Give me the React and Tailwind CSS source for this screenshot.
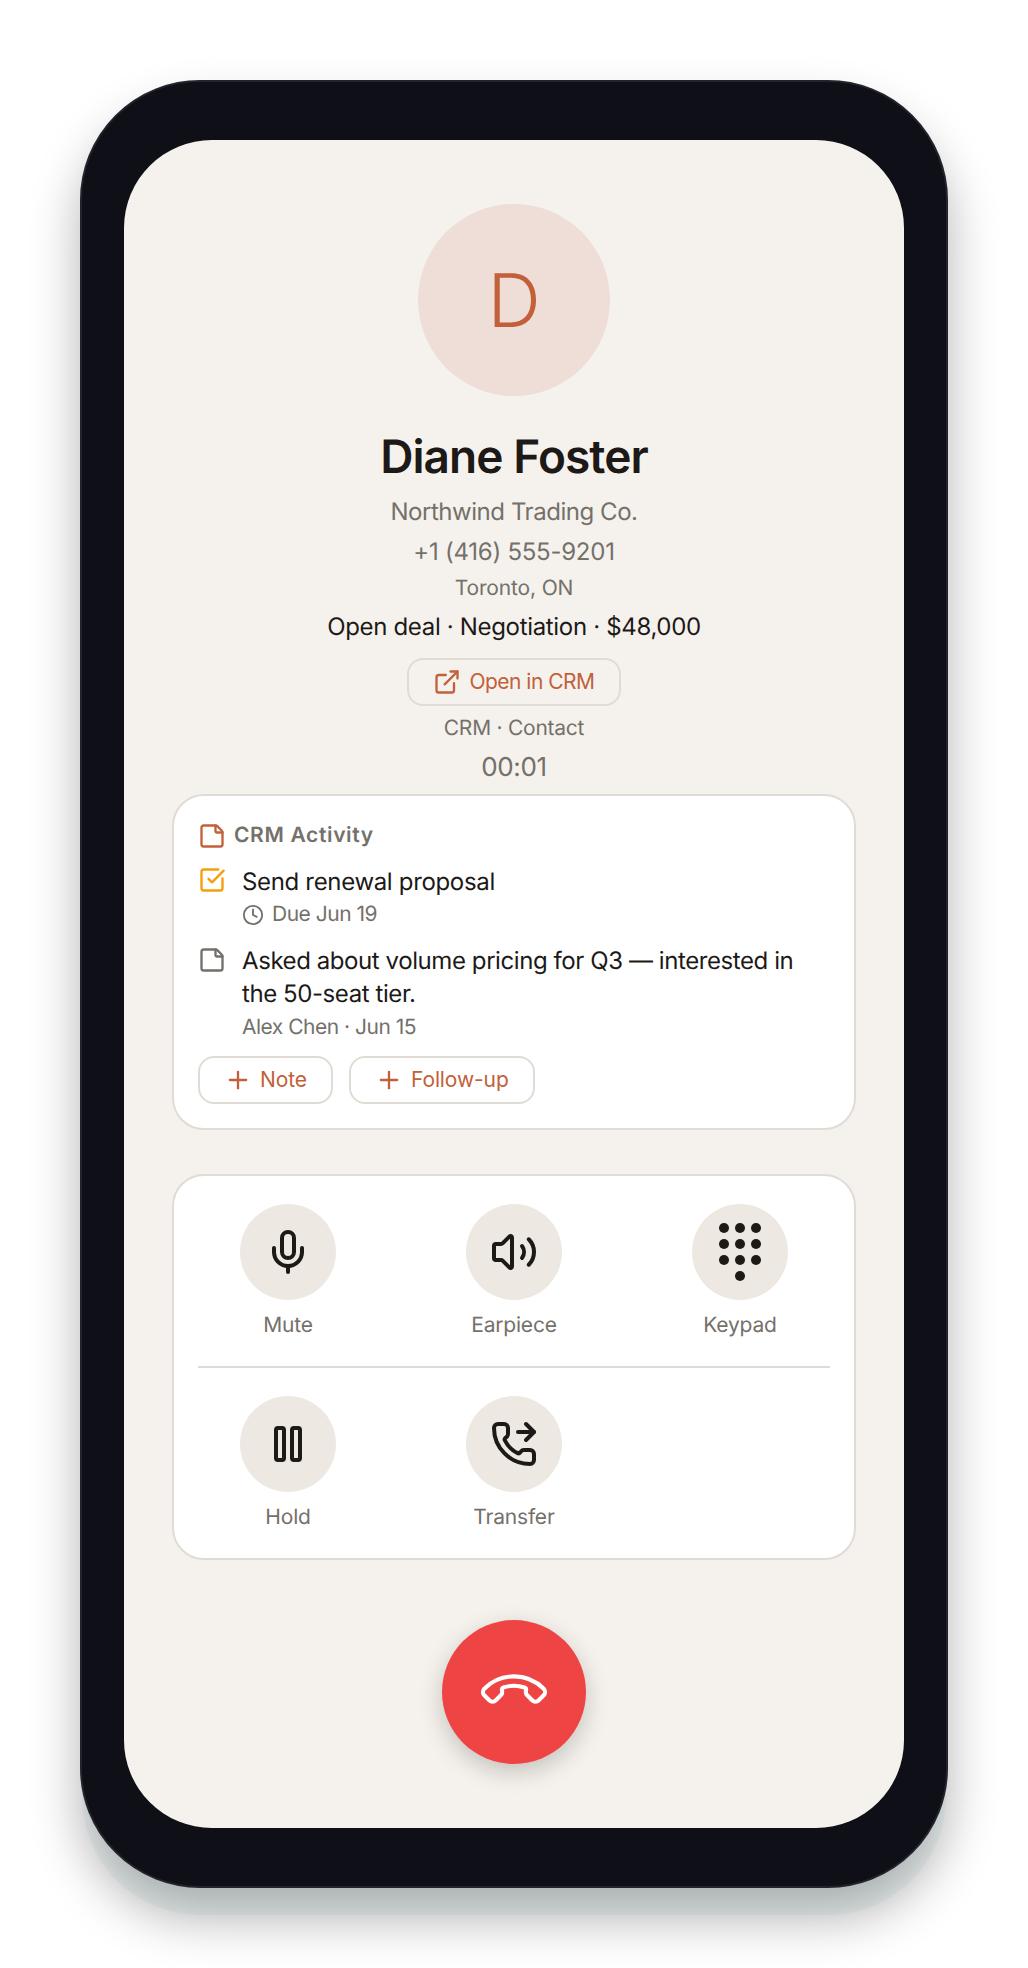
import { Clock, ExternalLink, Mic, Phone, PhoneForwarded, Plus, SquareCheckBig, StickyNote, Volume2 } from "lucide-react";

const Keypad = () => (
	<svg width="48" height="64" viewBox="0 0 48 64" fill="#1c1917">
		{[8, 24, 40].map((cy) =>
			[8, 24, 40].map((cx) => <circle key={`${cx}-${cy}`} cx={cx} cy={cy} r="5" />)
		)}
		<circle cx="24" cy="56" r="5" />
	</svg>
);

const PauseIcon = () => (
	<svg width="48" height="48" viewBox="0 0 24 24" fill="none" stroke="currentColor" strokeWidth="2" strokeLinejoin="round">
		<rect x="6" y="4" width="4" height="16" rx="1" />
		<rect x="14" y="4" width="4" height="16" rx="1" />
	</svg>
);

const CallAction = ({ label, children }) => (
	<div className="flex flex-col items-center gap-[11px]">
		<div className="flex h-[96px] w-[96px] items-center justify-center rounded-full bg-[#ede8e2] text-[#1c1917]">
			{children}
		</div>
		<span className="text-[21px] leading-[30px] font-[380] tracking-[-0.2px] text-[#74706a]">{label}</span>
	</div>
);

const AddButton = ({ label }) => (
	<button className="flex h-[48px] items-center gap-[8px] rounded-[16px] border-2 border-[#e0dcd5] px-[24px] text-[21px] tracking-[-0.1px] text-[#c2603a]">
		<Plus size={28} strokeWidth={2} />
		{label}
	</button>
);

export default function App() {
	return (
		<div className="h-[1968px] bg-white p-[80px] font-['Inter',sans-serif] [text-rendering:geometricPrecision]">
			<div className="h-[1808px] w-[868px] rounded-[120px] border-2 border-[#22232b] bg-[#0f1017] px-[42px] pt-[58px] pb-[58px] shadow-[0_30px_50px_rgba(0,0,0,0.3),0_29px_0_-2px_#f3fbfa]">
				<div className="flex h-full flex-col items-center rounded-[88px] bg-[#f5f2ed] px-[48px] pt-[64px]">
					<div className="flex h-[192px] w-[192px] items-center justify-center rounded-full bg-[#eeded7] text-[74px] font-[350] text-[#c2603a]">
						D
					</div>
					<h1 className="mt-[29px] text-[46px] leading-[64px] font-semibold tracking-[-0.92px] text-[#1c1917]">
						Diane Foster
					</h1>
					<p className="mt-[5px] text-[24px] leading-[36px] font-[380] tracking-[-0.45px] text-[#74706a]">Northwind Trading Co.</p>
					<p className="mt-[4px] text-[24px] leading-[36px] font-[380] tracking-[-0.25px] text-[#74706a]">+1 (416) 555-9201</p>
					<p className="mt-[4px] text-[21px] leading-[30px] font-[380] tracking-[-0.15px] text-[#74706a]">Toronto, ON</p>
					<p className="mt-[5px] text-[24px] leading-[36px] font-[380] tracking-[-0.33px] text-[#1c1917]">Open deal · Negotiation · $48,000</p>
					<button className="mt-[13px] flex h-[48px] items-center gap-[8px] rounded-[16px] border-2 border-[#e0dcd5] px-[24px] text-[21px] tracking-[-0.5px] text-[#c2603a]">
						<ExternalLink size={28} strokeWidth={2} />
						Open in CRM
					</button>
					<p className="mt-[8px] text-[21px] leading-[30px] font-[380] tracking-[-0.25px] text-[#74706a]">CRM · Contact</p>
					<p className="mt-[6px] text-[26px] leading-[36px] font-[380] tracking-[-0.4px] text-[#74706a]">00:01</p>

					<div className="mt-[8px] w-full rounded-[32px] border-2 border-[#e0dcd5] bg-white px-[24px] pt-[25px] pb-[24px]">
						<div className="flex items-center gap-[8px] text-[#c2603a]">
							<StickyNote size={28} strokeWidth={2} />
							<span className="text-[21px] leading-[30px] font-semibold tracking-[0.65px] text-[#74706a]">CRM Activity</span>
						</div>
						<div className="mt-[13px] flex gap-[16px]">
							<SquareCheckBig size={28} strokeWidth={2} className="mt-[2px] shrink-0 text-[#f59e0b]" />
							<div>
								<p className="text-[24px] leading-[36px] font-[380] tracking-[-0.33px] text-[#1c1917]">Send renewal proposal</p>
								<p className="flex items-center gap-[8px] text-[21px] leading-[30px] font-[380] tracking-[-0.5px] text-[#74706a]">
									<Clock size={22} strokeWidth={2} />
									Due Jun 19
								</p>
							</div>
						</div>
						<div className="mt-[14px] flex gap-[16px]">
							<StickyNote size={28} strokeWidth={2} className="mt-[2px] shrink-0 text-[#74706a]" />
							<div className="pr-[16px]">
								<p className="text-[24px] leading-[33px] font-[380] tracking-[-0.42px] text-[#1c1917]">
									Asked about volume pricing for Q3 — interested in the 50-seat tier.
								</p>
								<p className="mt-[3px] text-[21px] leading-[30px] font-[380] tracking-[-0.5px] text-[#74706a]">Alex Chen · Jun 15</p>
							</div>
						</div>
						<div className="mt-[13px] flex gap-[16px]">
							<AddButton label="Note" />
							<AddButton label="Follow-up" />
						</div>
					</div>

					<div className="mt-[44px] w-full rounded-[32px] border-2 border-[#e0dcd5] bg-white pt-[28px] pb-[25px]">
						<div className="grid grid-cols-3 px-[1px] pb-[25px]">
							<CallAction label="Mute"><Mic size={48} strokeWidth={2} /></CallAction>
							<CallAction label="Earpiece"><Volume2 size={48} strokeWidth={2} /></CallAction>
							<CallAction label="Keypad"><Keypad /></CallAction>
						</div>
						<div className="mx-[24px] border-t-2 border-[#e0dcd5]"></div>
						<div className="grid grid-cols-3 px-[1px] pt-[28px]">
							<CallAction label="Hold"><PauseIcon /></CallAction>
							<CallAction label="Transfer"><PhoneForwarded size={48} strokeWidth={2} /></CallAction>
						</div>
					</div>

					<button className="mt-[60px] flex h-[144px] w-[144px] items-center justify-center rounded-full bg-[#ef4444] text-white shadow-[0_8px_24px_rgba(0,0,0,0.2)]">
						<Phone size={56} strokeWidth={1.75} className="rotate-[135deg]" />
					</button>
				</div>
			</div>
		</div>
	);
}
